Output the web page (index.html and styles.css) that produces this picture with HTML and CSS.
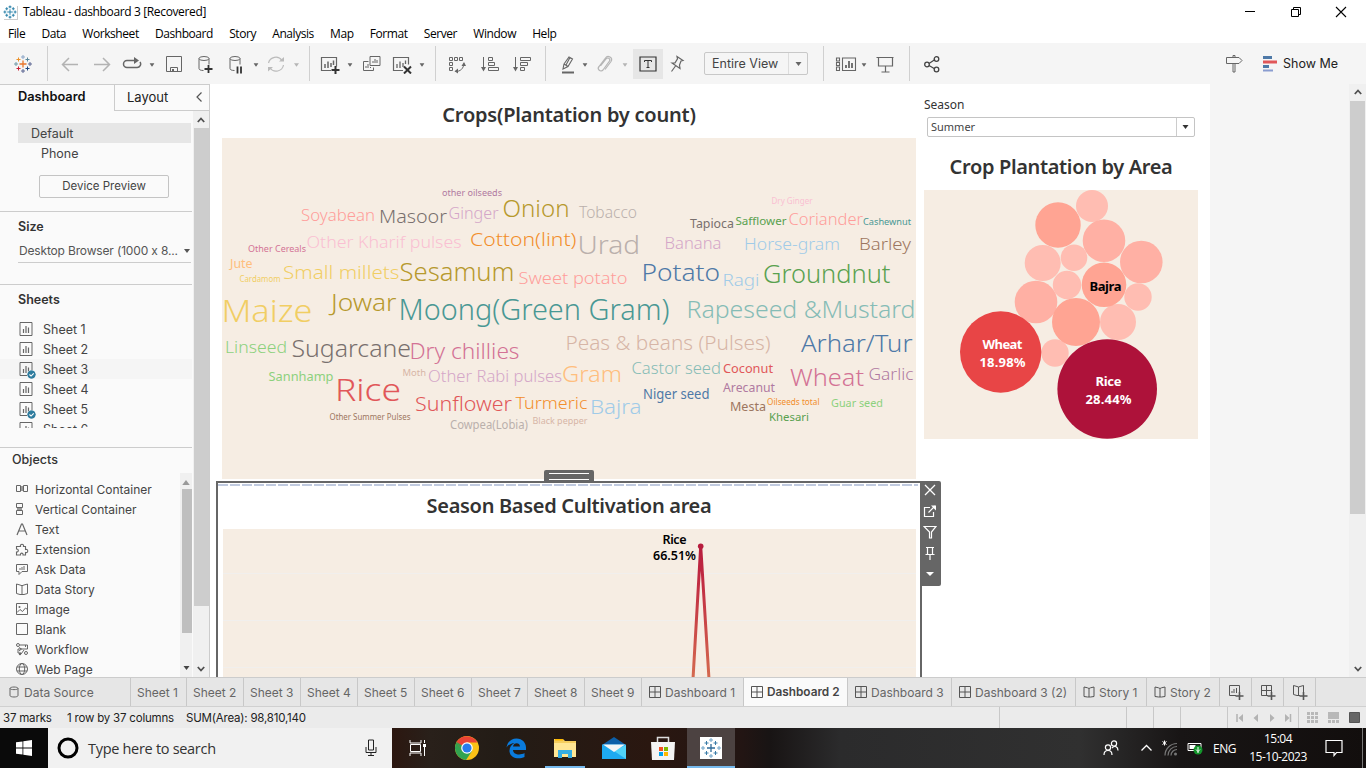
FILE: index.html
```html
<!DOCTYPE html>
<html lang="en">
<head>
<meta charset="utf-8">
<title>Tableau - dashboard 3 [Recovered]</title>
<link rel="stylesheet" href="styles.css">
</head>
<body>
<svg class="defs" width="0" height="0">
  <symbol id="sheet" viewBox="0 0 14 14"><path d="M1 .5h12v13H1z" fill="none" stroke="#666"/><path d="M4.500 7v4M7 4v7M9.500 5.500v5.500" stroke="#666" stroke-width="1.200"/></symbol>
  <symbol id="dash" viewBox="0 0 12 12"><path d="M.5 .5h11v11H.5zM6 .5v11M.5 6h11" fill="none" stroke="#555"/></symbol>
  <symbol id="book" viewBox="0 0 12 12"><path d="M1 1l3.500 .8L6 2.500l1.500-.7L11 1v9.500l-3.500 .5H4.500L1 10.500zM6 2.500V11" fill="none" stroke="#555"/></symbol>
  <symbol id="down" viewBox="0 0 6 4"><path d="M0 0h6L3 4z" fill="currentColor"/></symbol>
  <symbol id="chev" viewBox="0 0 8 6"><path d="M.8 5L4 1.500 7.200 5" fill="none" stroke="#505050" stroke-width="1.800"/></symbol>
</svg>

<header class="titlebar">
  <svg class="appicon" viewBox="0 0 15 15"><path d="M7.500 4.500v6M4.500 7.500h6M7.500 .5v3M6 2h3M7.500 11.500v3M6 13h3M2 6v3M.5 7.500h3M13 6v3M11.500 7.500h3M4 2.500v3M2.500 4h3M11 2.500v3M9.500 4h3M4 9.500v3M2.500 11h3M11 9.500v3M9.500 11h3" stroke="#2f84ab" stroke-width="1.100"/></svg>
  <span class="apptitle">Tableau - dashboard 3 [Recovered]</span>
  <div class="winbtns">
    <svg viewBox="0 0 12 12"><path d="M1 5.500h10" stroke="#000"/></svg>
    <svg viewBox="0 0 12 12"><path d="M1.500 3.500h7v7h-7zM3.500 3V1.500h7v7H9" fill="none" stroke="#000"/></svg>
    <svg viewBox="0 0 12 12"><path d="M1 1l10 10M11 1L1 11" stroke="#000" stroke-width="1.100"/></svg>
  </div>
</header>
<nav class="menu"><span>File</span><span>Data</span><span>Worksheet</span><span>Dashboard</span><span>Story</span><span>Analysis</span><span>Map</span><span>Format</span><span>Server</span><span>Window</span><span>Help</span></nav>

<div class="toolbar">
  <svg class="ic m13" viewBox="0 0 20 20"><path d="M10 6.500v7M6.500 10h7" stroke="#e8762c" stroke-width="1.300"/><path d="M10 1v4M8 3h4" stroke="#8ba5c7"/><path d="M10 15v4M8 17h4" stroke="#5b6591"/><path d="M3 8v4M1 10h4" stroke="#7099a6"/><path d="M17 8v4M15 10h4" stroke="#5b6591"/><path d="M5.500 3.500v4M3.500 5.500h4" stroke="#eb9129"/><path d="M14.500 3.500v4M12.500 5.500h4" stroke="#59879b"/><path d="M5.500 12.500v4M3.500 14.500h4" stroke="#c72035"/><path d="M14.500 12.500v4M12.500 14.500h4" stroke="#1f457e"/></svg>
  <i class="sep m14"></i>
  <svg class="ic m12" viewBox="0 0 20 20"><path d="M18 10.500H3M9 4l-6.500 6.500L9 17" fill="none" stroke="#b3b3b3" stroke-width="1.500"/></svg>
  <svg class="ic m12" viewBox="0 0 20 20"><path d="M2 10.500h15M11 4l6.500 6.500L11 17" fill="none" stroke="#b3b3b3" stroke-width="1.500"/></svg>
  <svg class="ic m10" viewBox="0 0 20 20"><path d="M13 6.500H5a3.500 3.500 0 0 0 0 7h10a3.500 3.500 0 0 0 3-5.500" fill="none" stroke="#666" stroke-width="1.500"/><path d="M12 3l5 3.500-5 3.500z" fill="#666"/></svg>
  <svg class="caret"><use href="#down" x="7.500" y="9" width="5" height="4"/></svg>
  <svg class="ic m2" viewBox="0 0 20 20"><path d="M2.500 2.500h15v15h-15zM6.500 17.500v-4h7v4" fill="none" stroke="#666"/><path d="M8 15h2v2H8z" fill="#666"/></svg>
  <svg class="ic m11" viewBox="0 0 20 20"><ellipse cx="9" cy="4.500" rx="5" ry="2" fill="none" stroke="#666"/><path d="M4 4.500v10c0 1.200 1.500 2 4.500 2M14 4.500v6" fill="none" stroke="#666"/><path d="M13.500 11v8M9.500 15h8" stroke="#333" stroke-width="1.800"/></svg>
  <svg class="ic m11" viewBox="0 0 20 20"><ellipse cx="9" cy="4.500" rx="5" ry="2" fill="none" stroke="#666"/><path d="M4 4.500v10c0 1.200 1.500 2 4.500 2M14 4.500v6" fill="none" stroke="#666"/><path d="M11.500 12.500v7M15 12.500v7" stroke="#333" stroke-width="1.800"/></svg>
  <svg class="caret"><use href="#down" x="7.500" y="9" width="5" height="4"/></svg>
  <svg class="ic" viewBox="0 0 20 20"><path d="M2.500 9A7.500 7.500 0 0 1 16 6.500M17.500 11A7.500 7.500 0 0 1 4 14" fill="none" stroke="#bbb" stroke-width="1.200"/><path d="M13 7.500h5V3zM7 13H2v4.500z" fill="#bbb"/></svg>
  <svg class="caret dim"><use href="#down" x="8" y="9" width="5" height="4"/></svg>
  <i class="sep m3"></i>
  <svg class="ic m10" viewBox="0 0 20 20"><path d="M11 16.500H1.500v-13h15v9" fill="none" stroke="#666" stroke-width="1.200"/><path d="M5 10v4M8 7.500V14M11 9v4M13.500 6.500V11" stroke="#666" stroke-width="1.500"/><path d="M15.500 12v8M11.500 16h8" stroke="#333" stroke-width="2"/></svg>
  <svg class="caret"><use href="#down" x="7.500" y="9" width="5" height="4"/></svg>
  <svg class="ic m2" viewBox="0 0 20 20"><path d="M8 2.500h10v9H8zM6.500 7.500h-5v9h10v-3" fill="none" stroke="#666"/><path d="M11 9V7M13 9V5M15 9V6M4 14v-2M6 14v-4M8.500 14v-1" stroke="#666"/></svg>
  <svg class="ic m10" viewBox="0 0 20 20"><path d="M11 16.500H1.500v-13h15v7" fill="none" stroke="#666" stroke-width="1.200"/><path d="M5 10v4M8 7.500V14M11 9v4M13.500 6.500V10" stroke="#666" stroke-width="1.300"/><path d="M12 12.500l7 7M19 12.500l-7 7" stroke="#333" stroke-width="2"/></svg>
  <svg class="caret"><use href="#down" x="7.500" y="9" width="5" height="4"/></svg>
  <i class="sep m3"></i>
  <svg class="ic m11" viewBox="0 0 20 20"><path d="M2.500 3.500h3v3h-3zM7.500 3.500h3v3h-3zM12.500 3.500h3v3h-3zM2.500 8.500h3v3h-3zM2.500 13.500h3v3h-3zM8.500 17.500c5 0 8-3 8.500-8" fill="none" stroke="#666"/><path d="M11 14.500v5L7.500 17.200zM14.500 12l2.500-4 2 4z" fill="#666"/></svg>
  <svg class="ic m13" viewBox="0 0 20 20"><path d="M3.500 3v13M8.500 3.500h4v3h-4zM8.500 8.500h6v3h-6zM8.500 13.500h10v3h-10z" fill="none" stroke="#666"/><path d="M1 13h5l-2.500 4.500z" fill="#666"/></svg>
  <svg class="ic m12" viewBox="0 0 20 20"><path d="M3.500 3v13M8.500 3.500h10v3h-10zM8.500 8.500h7v3h-7zM8.500 13.500h4v3h-4z" fill="none" stroke="#666"/><path d="M1 13h5l-2.500 4.500z" fill="#666"/></svg>
  <i class="sep m13"></i>
  <svg class="ic m12" viewBox="0 0 20 20"><path d="M6 10l5-7 3.500 2-4.500 7.500-5 2.500zM6 10l4 2.500M12 3.500l-4 7.500" fill="none" stroke="#666" stroke-width="1.100"/><path d="M4 18.500h12" stroke="#666" stroke-width="2"/></svg>
  <svg class="caret n"><use href="#down" x="4.500" y="9" width="5" height="4"/></svg>
  <svg class="ic m3" viewBox="0 0 20 20"><path d="M5.500 12L11 5a2 2 0 0 1 3.500 2L8 16a2.600 2.600 0 0 1-4-3.500L10.500 4a3.200 3.200 0 0 1 5.500 3.500L10 15.500" fill="none" stroke="#b5b5b5" stroke-width="1.200"/></svg>
  <svg class="caret c18 dim"><use href="#down" x="7.500" y="9" width="5" height="4"/></svg>
  <span class="tbox"><svg class="ic" viewBox="0 0 20 20"><path d="M2 3h16v14H2z" fill="none" stroke="#333" stroke-width="1.200"/><path d="M6.500 8V6.500h7V8M10 6.500v7M8.500 13.500h3" fill="none" stroke="#333"/></svg></span>
  <svg class="ic m4" viewBox="0 0 20 20"><path d="M10 2.500l6 4-2 .5-1.500 4 .5 3.500-8-5.500 3-.2 2.500-4zM8.500 12L4.500 17.500" fill="none" stroke="#666" stroke-width="1.200"/></svg>
  <span class="viewsel"><b>Entire View</b><svg class="selcaret"><use href="#down" x="6" y="9" width="7" height="4"/></svg></span>
  <i class="sep m15"></i>
  <svg class="ic w22 m11" viewBox="0 0 22 20"><path d="M1.500 4h3v3h-3zM1.500 8.500h3v3h-3zM1.500 13h3v3.500h-3zM7.500 4h13v12.500h-13z" fill="none" stroke="#666" stroke-width="1.100"/><path d="M11 11v3M14 7v7M17 9v5" stroke="#666" stroke-width="1.800"/></svg>
  <svg class="caret n"><use href="#down" x="4.500" y="9" width="5" height="4"/></svg>
  <svg class="ic m4" viewBox="0 0 20 20"><path d="M1.500 3.500h17M3.500 4v8h14V4M10.500 12v6M6.500 18h8" fill="none" stroke="#666" stroke-width="1.200"/></svg>
  <i class="sep m14"></i>
  <svg class="ic m12" viewBox="0 0 20 20"><path d="M7 9.500l6-4M7 11.500l6 3.500" stroke="#444" stroke-width="1.200"/><g fill="none" stroke="#444" stroke-width="1.300"><circle cx="5" cy="10.500" r="2.300"/><circle cx="14.500" cy="5" r="2.300"/><circle cx="14.500" cy="15.500" r="2.300"/></g></svg>
  <svg class="ic push" viewBox="0 0 20 20"><path d="M9 3V1.500h2V3M2.500 3.500h12.500l3 3-3 3H2.500zM9 9.500V18h2V9.500" fill="none" stroke="#666"/></svg>
  <svg class="ic m17" viewBox="0 0 20 20"><path d="M2 3.500h9" stroke="#4e79a7" stroke-width="3"/><path d="M2 8h14" stroke="#e15759" stroke-width="3"/><path d="M2 12.500h6" stroke="#4e79a7" stroke-width="3"/><path d="M2 16.500h10" stroke="#8a9dd0" stroke-width="2"/></svg>
  <span class="showme">Show Me</span>
</div>

<main class="work">
  <aside class="side">
    <div class="sidetabs"><b>Dashboard</b><span>Layout</span><svg viewBox="0 0 8 10"><path d="M6.500 .5L2 5l4.500 4.500" fill="none" stroke="#555" stroke-width="1.200"/></svg></div>
    <div class="sidebody">
      <div class="sidecol">
        <section class="device">
          <div class="dev on">Default</div><div class="dev phone">Phone</div>
          <button class="preview">Device Preview</button>
        </section>
        <section class="size"><h3>Size</h3><div class="sizesel"><span>Desktop Browser (1000 x 8...</span><svg width="8" height="4"><use href="#down" width="8" height="4"/></svg></div></section>
        <section class="sheets"><h3>Sheets</h3>
          <div class="sheetlist">
            <div><svg class="si"><use href="#sheet"/></svg>Sheet 1</div>
            <div><svg class="si"><use href="#sheet"/></svg>Sheet 2</div>
            <div class="hov"><svg class="si"><use href="#sheet"/></svg><svg class="tick" viewBox="0 0 8 8"><circle cx="4" cy="4" r="3.800" fill="#2e7c9e"/><path d="M2.200 4l1.400 1.400L6 3" fill="none" stroke="#fff"/></svg>Sheet 3</div>
            <div><svg class="si"><use href="#sheet"/></svg>Sheet 4</div>
            <div class="used"><svg class="si"><use href="#sheet"/></svg><svg class="tick" viewBox="0 0 8 8"><circle cx="4" cy="4" r="3.800" fill="#2e7c9e"/><path d="M2.200 4l1.400 1.400L6 3" fill="none" stroke="#fff"/></svg>Sheet 5</div>
            <div><svg class="si"><use href="#sheet"/></svg>Sheet 6</div>
          </div>
        </section>
        <section class="objects"><h3>Objects</h3>
          <div class="objwrap">
            <div class="objlist">
              <div><svg viewBox="0 0 14 14"><path d="M1.500 3.500h4v6h-4zM8.500 3.500h4v6h-4z" fill="none" stroke="#666"/><path d="M6 4h2v5H6z" fill="#999"/></svg>Horizontal Container</div>
              <div><svg viewBox="0 0 14 14"><path d="M1.500 1.500h6v4h-6zM1.500 8.500h6v4h-6z" fill="none" stroke="#666"/><path d="M2 6h5v2H2z" fill="#999"/></svg>Vertical Container</div>
              <div><svg viewBox="0 0 14 14"><path d="M2 13L6.500 2h1L12 13M4 9h6" fill="none" stroke="#666" stroke-width="1.200"/></svg>Text</div>
              <div><svg viewBox="0 0 14 14"><path d="M3.500 4.500h2c-1-3 4-3 3 0h2v3c3-1 3 4 0 3v2.500H8c.500-2.500-3-2.500-2.500 0H1.500V10c2.500 0 2.500-3 0-3v-2.500z" fill="none" stroke="#666" stroke-width="1.100"/></svg>Extension</div>
              <div><svg viewBox="0 0 14 14"><path d="M1.500 2.500h11v7H7L4 12.500v-3H1.500z" fill="none" stroke="#666"/><path d="M5 8V6M7 8V5M9 8V4" stroke="#999" stroke-width="1.500"/></svg>Ask Data</div>
              <div><svg viewBox="0 0 14 14"><path d="M1.500 2L5 3l2 .7L9 3l3.500-1v9.500L9 12.500H5l-3.500-1zM7 3.500v9" fill="none" stroke="#666"/></svg>Data Story</div>
              <div><svg viewBox="0 0 14 14"><path d="M1.500 1.500h11v11h-11zM2 10.500l3-3 2.500 2 3-3.500 2 1.500" fill="none" stroke="#666"/><circle cx="4.500" cy="5" r="1" fill="#666"/></svg>Image</div>
              <div><svg viewBox="0 0 14 14"><path d="M1.500 1.500h11v11h-11z" fill="none" stroke="#666"/></svg>Blank</div>
              <div><svg viewBox="0 0 14 14"><path d="M5 3h7.500v4H3v4h3M4 5.500L6.500 7 4 9M6 12l3-4M10.500 3v2" fill="none" stroke="#666"/><circle cx="3" cy="3" r="1.500" fill="none" stroke="#666"/><circle cx="11" cy="11" r="1.500" fill="none" stroke="#666"/><circle cx="5" cy="12" r="1.200" fill="#666"/></svg>Workflow</div>
              <div><svg viewBox="0 0 14 14"><g fill="none" stroke="#666"><circle cx="7" cy="7" r="5.500"/><ellipse cx="7" cy="7" rx="2.700" ry="5.500"/><path d="M2 5h10M2 9h10"/></g></svg>Web Page</div>
            </div>
            <div class="innerbar"><svg width="8" height="5" viewBox="0 0 6 4"><path d="M0 4h6L3 0z" fill="#999"/></svg><i></i><svg width="7" height="4"><use href="#down" width="7" height="4"/></svg></div>
          </div>
        </section>
      </div>
      <div class="vbar"><svg width="8" height="6"><use href="#chev"/></svg><i class="thumb a"></i><svg class="flip" width="8" height="6"><use href="#chev"/></svg></div>
    </div>
  </aside>

  <div class="canvas">
    <div class="leftcol">
      <h2 class="t1">Crops(Plantation by count)</h2>
      <svg class="cloud" viewBox="222 138 694 341">
        <g class="small">
        <text x="442" y="196" font-size="9.500" textLength="60" lengthAdjust="spacingAndGlyphs" fill="#b07aa1">other oilseeds</text>
        <text x="771.500" y="204" font-size="8.500" textLength="41" lengthAdjust="spacingAndGlyphs" fill="#fabfd2">Dry Ginger</text>
        <text x="690" y="228" font-size="12" textLength="44" lengthAdjust="spacingAndGlyphs" fill="#79706e">Tapioca</text>
        <text x="735.500" y="224.700" font-size="11" textLength="51" lengthAdjust="spacingAndGlyphs" fill="#59a14f">Safflower</text>
        <text x="863" y="224.700" font-size="9.500" textLength="48" lengthAdjust="spacingAndGlyphs" fill="#499894">Cashewnut</text>
        <text x="248" y="252" font-size="9.500" textLength="58" lengthAdjust="spacingAndGlyphs" fill="#d37295">Other Cereals</text>
        <text x="230" y="268" font-size="12" textLength="22.500" lengthAdjust="spacingAndGlyphs" fill="#ffbe7d">Jute</text>
        <text x="239.500" y="282" font-size="8" textLength="41" lengthAdjust="spacingAndGlyphs" fill="#f1ce63">Cardamom</text>
        <text x="268.500" y="381.300" font-size="13" textLength="65" lengthAdjust="spacingAndGlyphs" fill="#8cd17d">Sannhamp</text>
        <text x="402.500" y="375.500" font-size="9.500" textLength="23.500" lengthAdjust="spacingAndGlyphs" fill="#d7b5a6">Moth</text>
        <text x="723" y="373" font-size="12.500" textLength="50" lengthAdjust="spacingAndGlyphs" fill="#e15759">Coconut</text>
        <text x="723" y="392" font-size="12" textLength="52" lengthAdjust="spacingAndGlyphs" fill="#b07aa1">Arecanut</text>
        <text x="643" y="399" font-size="13.500" textLength="66.500" lengthAdjust="spacingAndGlyphs" fill="#4e79a7">Niger seed</text>
        <text x="730" y="411" font-size="12.500" textLength="36" lengthAdjust="spacingAndGlyphs" fill="#9d7660">Mesta</text>
        <text x="767" y="404.700" font-size="8" textLength="52.500" lengthAdjust="spacingAndGlyphs" fill="#f28e2b">Oilseeds total</text>
        <text x="831" y="407" font-size="11.500" textLength="52" lengthAdjust="spacingAndGlyphs" fill="#8cd17d">Guar seed</text>
        <text x="769" y="420.700" font-size="11.500" textLength="40" lengthAdjust="spacingAndGlyphs" fill="#59a14f">Khesari</text>
        <text x="329.500" y="419.700" font-size="8.500" textLength="81" lengthAdjust="spacingAndGlyphs" fill="#9d7660">Other Summer Pulses</text>
        <text x="450" y="429" font-size="12" textLength="78" lengthAdjust="spacingAndGlyphs" fill="#bab0ac">Cowpea(Lobia)</text>
        <text x="532.500" y="423.500" font-size="9.500" textLength="55" lengthAdjust="spacingAndGlyphs" fill="#d7b5a6">Black pepper</text>
        </g>
        <g>
        <text x="301" y="221" font-size="16" textLength="74" lengthAdjust="spacingAndGlyphs" fill="#ff9d9a">Soyabean</text>
        <text x="379" y="222.700" font-size="18" textLength="68" lengthAdjust="spacingAndGlyphs" fill="#79706e">Masoor</text>
        <text x="448.500" y="219.300" font-size="16" textLength="50" lengthAdjust="spacingAndGlyphs" fill="#d4a6c8">Ginger</text>
        <text x="502.500" y="217" font-size="24" textLength="67" lengthAdjust="spacingAndGlyphs" fill="#b6992d">Onion</text>
        <text x="579" y="218" font-size="15.500" textLength="58" lengthAdjust="spacingAndGlyphs" fill="#bab0ac">Tobacco</text>
        <text x="788.500" y="225.300" font-size="16.500" textLength="74.500" lengthAdjust="spacingAndGlyphs" fill="#ff9d9a">Coriander</text>
        <text x="306.500" y="248" font-size="16.500" textLength="155" lengthAdjust="spacingAndGlyphs" fill="#fabfd2">Other Kharif pulses</text>
        <text x="470" y="246.300" font-size="18.500" textLength="106.500" lengthAdjust="spacingAndGlyphs" fill="#f28e2b">Cotton(lint)</text>
        <text x="577.500" y="253.700" font-size="26.500" textLength="62.500" lengthAdjust="spacingAndGlyphs" fill="#bab0ac">Urad</text>
        <text x="664.500" y="249.300" font-size="16" textLength="57" lengthAdjust="spacingAndGlyphs" fill="#d4a6c8">Banana</text>
        <text x="744" y="250.300" font-size="17" textLength="96" lengthAdjust="spacingAndGlyphs" fill="#a0cbe8">Horse-gram</text>
        <text x="859" y="250.300" font-size="17" textLength="52" lengthAdjust="spacingAndGlyphs" fill="#9d7660">Barley</text>
        <text x="283" y="279" font-size="18" textLength="116.500" lengthAdjust="spacingAndGlyphs" fill="#f1ce63">Small millets</text>
        <text x="399.500" y="281" font-size="25" textLength="115" lengthAdjust="spacingAndGlyphs" fill="#b6992d">Sesamum</text>
        <text x="518.500" y="284" font-size="16.500" textLength="109" lengthAdjust="spacingAndGlyphs" fill="#ff9d9a">Sweet potato</text>
        <text x="641.500" y="280.700" font-size="24" textLength="78.500" lengthAdjust="spacingAndGlyphs" fill="#4e79a7">Potato</text>
        <text x="722.500" y="286" font-size="17" textLength="37" lengthAdjust="spacingAndGlyphs" fill="#a0cbe8">Ragi</text>
        <text x="763" y="283.300" font-size="25" textLength="127.500" lengthAdjust="spacingAndGlyphs" fill="#59a14f">Groundnut</text>
        <text x="221.500" y="321.700" font-size="32" textLength="91" lengthAdjust="spacingAndGlyphs" fill="#f1ce63">Maize</text>
        <text x="331" y="310.700" font-size="23" textLength="65.500" lengthAdjust="spacingAndGlyphs" fill="#b6992d">Jowar</text>
        <text x="398.500" y="320" font-size="29" textLength="271" lengthAdjust="spacingAndGlyphs" fill="#499894">Moong(Green Gram)</text>
        <text x="686.500" y="318" font-size="24.500" textLength="229" lengthAdjust="spacingAndGlyphs" fill="#86bcb6">Rapeseed &amp;Mustard</text>
        <text x="225" y="353" font-size="16.500" textLength="62" lengthAdjust="spacingAndGlyphs" fill="#8cd17d">Linseed</text>
        <text x="291.500" y="357" font-size="24" textLength="119.500" lengthAdjust="spacingAndGlyphs" fill="#79706e">Sugarcane</text>
        <text x="409.500" y="359" font-size="21" textLength="110" lengthAdjust="spacingAndGlyphs" fill="#d37295">Dry chillies</text>
        <text x="565.500" y="350" font-size="20" textLength="205" lengthAdjust="spacingAndGlyphs" fill="#d7b5a6">Peas &amp; beans (Pulses)</text>
        <text x="801" y="351.700" font-size="24.500" textLength="111.500" lengthAdjust="spacingAndGlyphs" fill="#4e79a7">Arhar/Tur</text>
        <text x="335" y="401" font-size="32" textLength="66" lengthAdjust="spacingAndGlyphs" fill="#e15759">Rice</text>
        <text x="428" y="381.700" font-size="16.500" textLength="134" lengthAdjust="spacingAndGlyphs" fill="#d4a6c8">Other Rabi pulses</text>
        <text x="562" y="382" font-size="22.500" textLength="60" lengthAdjust="spacingAndGlyphs" fill="#ffbe7d">Gram</text>
        <text x="631.500" y="374" font-size="15.500" textLength="89.500" lengthAdjust="spacingAndGlyphs" fill="#86bcb6">Castor seed</text>
        <text x="790" y="385.700" font-size="24.500" textLength="74" lengthAdjust="spacingAndGlyphs" fill="#d37295">Wheat</text>
        <text x="868.500" y="380" font-size="16" textLength="45" lengthAdjust="spacingAndGlyphs" fill="#b07aa1">Garlic</text>
        <text x="415" y="411.300" font-size="20" textLength="97" lengthAdjust="spacingAndGlyphs" fill="#e15759">Sunflower</text>
        <text x="515.500" y="408.700" font-size="17" textLength="72" lengthAdjust="spacingAndGlyphs" fill="#f28e2b">Turmeric</text>
        <text x="590" y="414" font-size="20" textLength="51.500" lengthAdjust="spacingAndGlyphs" fill="#a0cbe8">Bajra</text>
        </g>
      </svg>
      <div class="selected">
        <div class="dashline"></div>
        <h2 class="t2">Season Based Cultivation area</h2>
        <svg class="line" viewBox="223 529 693 148">
          <defs><linearGradient id="lg" gradientUnits="userSpaceOnUse" x1="0" y1="546" x2="0" y2="677"><stop offset="0" stop-color="#b71d3e"/><stop offset=".25" stop-color="#c02a42"/><stop offset="1" stop-color="#d4694f"/></linearGradient></defs>
          <path d="M223 573.500h693M223 620.500h693M223 667.500h693" stroke="#f1efed"/>
          <path d="M693 679L700.700 546 709 679" fill="none" stroke="url(#lg)" stroke-width="3"/>
          <circle cx="700.700" cy="546.300" r="2.800" fill="#b71d3e"/>
          <text x="674.500" y="544" textLength="24">Rice</text><text x="674.500" y="560" textLength="43">66.51%</text>
        </svg>
        <div class="grip"></div>
        <div class="floatbar">
          <svg viewBox="0 0 14 14"><path d="M2 2l10 10M12 2L2 12" stroke="#fff" stroke-width="1.300"/></svg>
          <svg viewBox="0 0 14 14"><path d="M7 3.500H1.500v9h9V8M5.500 8.500L12 2" fill="none" stroke="#fff" stroke-width="1.200"/><path d="M8 1.500h5v5z" fill="#fff"/></svg>
          <svg viewBox="0 0 14 14"><path d="M1 1.500h12L8.500 7v6h-2V7z" fill="none" stroke="#fff" stroke-width="1.200"/></svg>
          <svg viewBox="0 0 14 14"><path d="M3 1.500h8M4.500 1.500V8M9.500 1.500V8M2.500 8.500h9M7 8.500V14" fill="none" stroke="#fff" stroke-width="1.200"/></svg>
          <svg viewBox="0 0 14 14"><path d="M3 5h8l-4 4z" fill="#fff"/></svg>
        </div>
      </div>
    </div>
    <div class="rightcol">
      <label class="season">Season</label>
      <div class="seasonsel"><span>Summer</span><svg class="sc"><use href="#down" x="5" y="7" width="7" height="4"/></svg></div>
      <h2 class="t3">Crop Plantation by Area</h2>
      <svg class="bubbles" viewBox="924 190 274 249">
        <g fill="#ffbdb2"><circle cx="1092" cy="206" r="16"/><circle cx="1042.700" cy="263" r="18"/><circle cx="1074" cy="257.700" r="13.300"/><circle cx="1067" cy="285" r="14.200"/><circle cx="1138" cy="297" r="13.700"/><circle cx="1118" cy="322" r="18"/><circle cx="1055" cy="353" r="13.700"/></g>
        <g fill="#ffb0a4"><circle cx="1104" cy="240.700" r="21.300"/><circle cx="1141.300" cy="262" r="21.300"/><circle cx="1036" cy="302" r="21.300"/></g>
        <g fill="#ffa493"><circle cx="1058" cy="225" r="22.700"/><circle cx="1104" cy="284.800" r="22.300"/><circle cx="1076" cy="322" r="24"/></g>
        <circle cx="1000.700" cy="352" r="40.700" fill="#e84546"/><circle cx="1107.200" cy="389" r="49.800" fill="#ae123a"/>
        <text x="1105.500" y="291" textLength="32">Bajra</text>
        <g fill="#fff"><text x="1002.500" y="349" textLength="40">Wheat</text><text x="1002.500" y="367" textLength="46">18.98%</text><text x="1108.500" y="386" textLength="26">Rice</text><text x="1108.500" y="404" textLength="46">28.44%</text></g>
      </svg>
    </div>
  </div>
  <div class="gutter"></div>
  <div class="vbar right"><svg width="8" height="6"><use href="#chev"/></svg><i class="thumb b"></i><svg class="flip" width="8" height="6"><use href="#chev"/></svg></div>
</main>

<div class="tabs">
  <span class="ds"><svg viewBox="0 0 10 12"><path d="M1 2.500C1 .5 9 .5 9 2.500v7c0 2-8 2-8 0zM1 2.500c0 1.500 8 1.500 8 0" fill="none" stroke="#666"/></svg>Data Source</span>
  <span>Sheet 1</span><span>Sheet 2</span><span>Sheet 3</span><span>Sheet 4</span><span>Sheet 5</span><span>Sheet 6</span><span>Sheet 7</span><span>Sheet 8</span><span>Sheet 9</span>
  <span><svg><use href="#dash"/></svg>Dashboard 1</span><span class="act"><svg><use href="#dash"/></svg>Dashboard 2</span><span><svg><use href="#dash"/></svg>Dashboard 3</span><span><svg><use href="#dash"/></svg>Dashboard 3 (2)</span>
  <span><svg><use href="#book"/></svg>Story 1</span><span><svg><use href="#book"/></svg>Story 2</span>
  <span class="new"><svg viewBox="0 0 16 16"><path d="M8 11.500H1.500v-10h10V8M4 9V7M6 9V5M8.500 9V4" fill="none" stroke="#555"/><path d="M11.500 8v8M7.500 12h8" stroke="#555" stroke-width="1.600"/></svg></span>
  <span class="new"><svg viewBox="0 0 16 16"><path d="M8 11.500H1.500v-10h10V8M6.500 1.500v10M1.500 6.500h10" fill="none" stroke="#555"/><path d="M11.500 8v8M7.500 12h8" stroke="#555" stroke-width="1.600"/></svg></span>
  <span class="new"><svg viewBox="0 0 16 16"><path d="M8 11.500H5l-3.500-1V1.500L5 2.500l1.500.5 1.500-.5 3.500-1V8M6.500 3v8.500" fill="none" stroke="#555"/><path d="M11.500 8v8M7.500 12h8" stroke="#555" stroke-width="1.600"/></svg></span>
</div>

<div class="status">
  <span class="s1">37 marks</span><span class="s2">1 row by 37 columns</span><span class="s3">SUM(Area): 98,810,140</span>
  <i class="c1"></i><i class="c2"></i><i class="c3"></i><i class="c4"></i>
  <div class="navs"><svg viewBox="0 0 60 8"><path d="M1 0v8M54.500 0v8" stroke="#b3b3b3" stroke-width="1.500"/><path d="M7 0v8L2.500 4zM22 0v8l-4.500-4zM34 0v8l4.500-4zM49 0v8l4.500-4z" fill="#b3b3b3"/></svg></div>
  <div class="views"><svg viewBox="0 0 54 12"><path d="M0 0h3v3H0zM4 0h3v3H4zM8 0h3v3H8zM0 4h3v3H0zM4 4h3v3H4zM8 4h3v3H8zM0 8h3v3H0zM4 8h3v3H4zM8 8h3v3H8zM21 0h11v7H21zM21 8h3v3h-3zM25 8h3v3h-3zM29 8h3v3h-3z" fill="#b8b8b8"/><path d="M42.500 .5h10v10h-10z" fill="#666" stroke="#555"/></svg></div>
</div>

<footer class="taskbar">
  <div class="start"><svg viewBox="0 0 16 16"><path d="M0 2.300L6.500 1.400V7.600H0zM7.300 1.300L16 0V7.600H7.300zM0 8.400h6.500v6.200L0 13.700zM7.300 8.400H16V16L7.300 14.700z" fill="#fff"/></svg></div>
  <div class="search"><svg class="ring" viewBox="0 0 22 22"><circle cx="11" cy="11" r="9" fill="none" stroke="#000" stroke-width="3"/></svg><span>Type here to search</span><svg class="mic" viewBox="0 0 12 18"><path d="M3.500 1h5v10h-5zM1 8v5.500h10V8M6 13.500V17M3 16.500h6" fill="none" stroke="#222"/></svg></div>
  <div class="apps">
    <span><svg viewBox="0 0 18 18"><path d="M1 1v3h11V1M1.500 5.500h10v7h-10zM1 17v-3h11v3M15.500 1v3M15.500 8v9" fill="none" stroke="#fff"/><path d="M14 5h3v3h-3z" fill="#fff"/></svg></span>
    <span><svg class="big" viewBox="0 0 24 24"><circle cx="12" cy="12" r="12" fill="#fbc116"/><path d="M12 12L1.600 6A12 12 0 0 0 11 23.950L17 15z" fill="#31a350"/><path d="M1.600 6A12 12 0 0 1 22.400 6.500H12L7 15z" fill="#ea4335"/><path d="M1.600 6L7 15l5 3-1-6z" fill="#31a350"/><circle cx="12" cy="12" r="5.800" fill="#fff"/><circle cx="12" cy="12" r="4.600" fill="#287ced"/></svg></span>
    <span><svg class="edge" viewBox="0 0 20 20"><path d="M.5 9C1.500 3 5.500 0 10.500 0 16.500 0 20 4.500 20 9v2.500H7c.2 5 7.500 5.500 11.500 3v4c-5 2.500-14 2-15-5.500-.4-4 2-7 5-8.500C5 5 2 6.500.5 9zM7 8h7c0-4.500-6.500-4.500-7 0z" fill="#0a7bdc"/></svg></span>
    <span class="open"><svg class="big" viewBox="0 0 24 24"><path d="M1 3h9l2 2h11v16H1z" fill="#f5ce5f"/><path d="M1 7h22v14H1z" fill="#ffe694"/><path d="M5 22v-8h14v8h-4v-4H9v4z" fill="#35aee4"/><path d="M2 3h8v1.500H2z" fill="#ffb900"/></svg></span>
    <span><svg class="big" viewBox="0 0 24 24"><path d="M0 9l12-8 12 8v3H0z" fill="#0d5fa8"/><path d="M0 8.500h24V23H0z" fill="#1eaaf1"/><path d="M24 9v14L12 15z" fill="#50d2f7"/><path d="M1 8.500h22L12 16z" fill="#f5f5f5"/></svg></span>
    <span><svg class="big" viewBox="0 0 24 24"><path d="M6.500 7V1.500h11V7" fill="none" stroke="#ddd" stroke-width="1.500"/><path d="M0 6h24l-1 18H1z" fill="#f4f4f4"/><path d="M8 11h4v4H8z" fill="#f25022"/><path d="M13 11h4v4h-4z" fill="#7fba00"/><path d="M8 16h4v4H8z" fill="#00a4ef"/><path d="M13 16h4v4h-4z" fill="#ffb900"/></svg></span>
    <span class="cur"><svg class="big" viewBox="0 0 24 24"><path d="M1 1h22v22H1z" fill="#fff"/><path d="M12 8v8M8 12h8" stroke="#2e6b99" stroke-width="1.300"/><path d="M12 2v4M10 4h4M12 18v4M10 20h4M4 10v4M2 12h4M20 10v4M18 12h4" stroke="#6fa3c7"/><path d="M7.500 5v4M5.500 7h4M16.500 5v4M14.500 7h4M7.500 15v4M5.500 17h4M16.500 15v4M14.500 17h4" stroke="#3a7ca8"/></svg></span>
  </div>
  <div class="tray">
    <svg class="people" viewBox="0 0 16 16"><g fill="none" stroke="#fff" stroke-width="1.200"><circle cx="11" cy="3.500" r="2.600"/><circle cx="5" cy="7.500" r="2.600"/><path d="M1 15c0-6 8-6 8 0M9 8c3-3 6-1 6 2.500"/></g></svg>
    <svg class="up" viewBox="0 0 12 8"><path d="M1 6.500l5-5 5 5" fill="none" stroke="#fff" stroke-width="1.300"/></svg>
    <svg class="wifi" viewBox="0 0 16 16"><path d="M3 15.500A12 12 0 0 1 15 3.500M6 15.500a9 9 0 0 1 9-9M9 15.500a6 6 0 0 1 6-6" fill="none" stroke="#777" stroke-width="1.200"/><circle cx="13.500" cy="14" r="1.500" fill="#777"/><path d="M2.500 .5v5M.5 1.500l4 3M4.500 1.500l-4 3" stroke="#fff"/></svg>
    <svg class="batt" viewBox="0 0 16 14"><path d="M1 2.500h13v7H1z" fill="none" stroke="#fff"/><path d="M2.500 4h6v4h-6z" fill="#fff"/><circle cx="11" cy="9" r="4.500" fill="#13952b"/><path d="M11 6v6M9 8.500l2 2 2-2" stroke="#fff" fill="none"/></svg>
    <span class="eng">ENG</span><span class="clock">15:04<br>15-10-2023</span>
    <svg class="note" viewBox="0 0 18 18"><path d="M1 1.500h16v12h-5.500L9 16.500 9 13.500H1z" fill="none" stroke="#fff" stroke-width="1.200"/></svg>
    <i class="peek"></i>
  </div>
</footer>
</body>
</html>
```
FILE: styles.css
```css
*{box-sizing:border-box}
body{margin:0;width:1366px;height:768px;overflow:hidden;display:flex;flex-direction:column;background:#fff;font-family:"Open Sans","Noto Sans",sans-serif;font-size:12px;color:#000}
svg{display:block;flex:none}
.defs{position:absolute}
h2,h3{margin:0}

.titlebar{height:23px;display:flex;align-items:center;padding-left:3px;flex:none}
.appicon{width:14px;height:14px;box-shadow:1px 1px 0 #ccc}
.apptitle{margin-left:6px;font-size:12px;letter-spacing:-.36px}
.winbtns{margin-left:auto;display:flex;gap:33.5px;padding-right:19px}
.winbtns svg{width:12px;height:12px}
.menu{height:20px;flex:none;display:flex;gap:16.2px;padding-left:8px;align-items:center;letter-spacing:-.43px}

.toolbar{height:41px;flex:none;background:#f5f5f5;display:flex;align-items:center;color:#666}
.ic{width:20px;height:20px}
.w22{width:22px}
.caret{width:20px;height:20px}
.caret.n{width:14px}.caret.c18{width:18px}
.dim{color:#b5b5b5}
.sep{width:1px;height:35px;background:#d0d0d0;flex:none}
.m2{margin-left:2px}.m3{margin-left:3px}.m4{margin-left:4px}.m10{margin-left:10px}.m11{margin-left:11px}.m12{margin-left:12px}.m13{margin-left:13px}.m14{margin-left:14px}.m15{margin-left:15px}.m17{margin-left:17px}
.tbox{width:30px;height:30px;background:#e6e6e6;display:flex;align-items:center;justify-content:center}
.viewsel{margin-left:17px;width:104px;height:23px;border:1px solid #c8c8c8;border-radius:2px;display:flex;align-items:center;justify-content:space-between;padding-left:7px}
.viewsel b{font:12.5px Inter,sans-serif;color:#444}
.selcaret{width:19px;height:21px;border-left:1px solid #ddd}
.push{margin-left:auto}
.showme{font:12.5px Inter,sans-serif;color:#222;width:54px;margin:0 29px 0 2px;white-space:nowrap}

.work{height:593px;flex:none;display:flex}
.side{width:210px;border-right:1px solid #ccc;border-top:1px solid #ccc;background:#fafafa;display:flex;flex-direction:column;font-family:Inter,sans-serif;color:#444}
.sidetabs{height:26px;flex:none;display:flex}
.sidetabs b{width:114px;padding:4px 0 0 18px;color:#111;font-weight:600;font-size:12.8px}
.sidetabs span{flex:1;border-left:1px solid #ccc;border-bottom:1px solid #ccc;padding:4px 0 0 12px;color:#222;font-size:13px}
.sidetabs svg{width:14px;height:26px;border-bottom:1px solid #ccc;padding:7px 6px 8px 0}
.sidebody{flex:1;display:flex;min-height:0}
.sidecol{width:192px;margin-right:1px;display:flex;flex-direction:column;min-height:0}
h3{font-size:12.5px;font-weight:600;color:#333;line-height:16px}
.device{height:101px;flex:none;border-bottom:1px solid #ccc;padding:12px 1px 0 18px;font-size:12.5px}
.dev{height:20px;line-height:21px;padding-left:13px}
.dev.on{background:#e6e6e6}
.phone{padding-left:23px}
.preview{display:block;margin:12px 0 0 21px;width:130px;height:23px;border:1px solid #c4c4c4;border-radius:2px;background:#fafafa;font:11.5px Inter,sans-serif;color:#444;padding:0 0 2px}
.size{height:73px;flex:none;border-bottom:1px solid #ccc;padding:7px 1px 0 18px}
.sizesel{height:28px;border-bottom:1px solid #ccc;display:flex;align-items:center;justify-content:space-between;padding:4px 0 0 1px;font-size:12px;white-space:nowrap;color:#555;letter-spacing:-.16px}
.sheets{height:163px;flex:none;border-bottom:1px solid #ccc;padding-top:7px}
.sheets h3{padding-left:18px}
.sheetlist{margin-top:11px;height:109px;overflow:hidden;font-size:12.5px}
.sheetlist div{height:20px;display:flex;align-items:center;padding-left:19px;position:relative;gap:10px}
.sheetlist .hov{background:#f5f5f5}
.si{width:14px;height:14px}
.tick{position:absolute;left:27px;top:11px;width:9px;height:9px;background:#fafafa;border-radius:50%}
.objects{flex:1;padding-top:4px;min-height:0;overflow:hidden}
.objects h3{padding-left:12px;font-weight:500}
.objwrap{display:flex;height:209px}
.objlist{width:180px;padding-top:11px;font-size:12px;height:209px;overflow:hidden}
.objlist div{height:20px;display:flex;align-items:center;padding-left:15px;gap:6px;white-space:nowrap}
.objlist svg{width:14px;height:14px}
.innerbar{width:12px;background:#f0f0f0;height:204px;margin-top:5px;display:flex;flex-direction:column;align-items:center;padding-top:7px;color:#444}
.innerbar i{width:10px;margin:4px 0 0 2px;height:144px;background:#bfbfbf;align-self:stretch}
.innerbar svg:last-child{margin-top:33px}
.vbar{width:16px;background:#f0f0f0;display:flex;flex-direction:column;align-items:center;padding-top:6px}
.thumb{width:15px;background:#cdcdcd;margin-top:5px;flex:none}
.thumb.a{height:478px}
.thumb.b{height:413px;margin-top:6px}
.flip{transform:scaleY(-1);margin-top:60px}
.vbar.right{width:17px;padding-top:5px}
.right .flip{margin-top:152px}
.gutter{width:139px;background:#f5f5f5;flex:none}

.canvas{width:1000px;flex:none;background:#fff;display:flex}
h2{font:600 20px/26px "Noto Sans",sans-serif;color:#333;text-align:center;white-space:nowrap}
.leftcol{width:712px;padding:18px 0 0 6px;flex:none}
.t1{margin-left:6px;width:694px;height:36px;letter-spacing:-.23px}
.cloud{width:694px;height:341px;margin-left:6px;background:#f6ede3}
.cloud text{font-family:"Noto Sans",sans-serif;font-weight:300}
.cloud .small text{font-weight:400}
.selected{position:relative;margin-top:2px;width:706px;height:196px;border:2px solid #666;border-bottom:0}
.dashline{height:2px;margin:1px 2px 0 0;background:repeating-linear-gradient(90deg,#c0cadf 0 10px,#fff 10px 12px)}
.t2{height:43px;padding-top:7px;letter-spacing:-.31px}
.line{width:693px;height:148px;margin-left:5px;background:#f6ede3}
.line text,.bubbles text{font:600 12.500px "Noto Sans",sans-serif;text-anchor:middle}
.bubbles text{font-weight:700;font-size:13px}
.grip{position:absolute;left:326px;top:-13px;width:50px;height:12px;background:#666;border-radius:2px 2px 0 0}
.grip::before{content:"";display:block;width:40px;height:5px;border-top:1px solid #fff;border-bottom:1px solid #fff;transform:translate(5px,3px)}
.floatbar{position:absolute;left:702px;top:-2px;width:21px;height:105px;background:#666;border-radius:0 2px 2px 0;display:flex;flex-direction:column;align-items:center;gap:7px;padding:2px 1px 0 0}
.floatbar svg{width:14px;height:14px}
.rightcol{width:276px;padding:13px 2px 0;margin-left:0}
.season{display:block;font:12px/16px "Noto Sans",sans-serif;color:#333}
.seasonsel{margin:4px 0 0 3px;width:268px;height:20px;border:1px solid #c4c4c4;border-radius:2px;display:flex;align-items:center;justify-content:space-between;font:11px "Noto Sans",sans-serif;color:#444;padding-left:3px}
.seasonsel span{padding-bottom:1px}
.sc{width:18px;height:18px;border-left:1px solid #ccc;color:#333}
.t3{margin-top:17px;height:36px;width:274px;letter-spacing:-.35px}
.bubbles{width:274px;height:249px;background:#f6ede3}

.tabs{height:30px;flex:none;background:#e6e6e6;border-top:1px solid #ccc;border-bottom:1px solid #d0d0d0;display:grid;grid-template-columns:131px 56px 57px 57px 57px 57px 57px 56px 57px 57px 102px 104px 104px 124px 71px 73px 32px 32px 32px;font:12px Inter,sans-serif;color:#666}
.tabs span{border-right:1px solid #c8c8c8;display:flex;align-items:center;padding-left:7px;gap:4px;white-space:nowrap}
.tabs span:nth-child(-n+10){padding-left:6px}
.tabs svg{width:12px;height:12px}
.tabs .ds:first-child{padding-left:9px;gap:5px}.tabs .ds svg{width:10px}
.tabs .act{background:#fafafa;color:#444;font-weight:600;font-size:11.8px}
.tabs .new{padding-left:8px}.tabs .new svg{width:16px;height:16px}
.status{height:21px;flex:none;background:#ebebeb;display:flex;align-items:center;font:11.500px Inter,sans-serif;color:#222;white-space:nowrap;letter-spacing:-.2px}
.s1{width:67px;padding-left:3px}.s2{width:119px}.s3{width:813px}
.status i,.navs,.views{height:21px;border-left:1px solid #c8c8c8;flex:none}
.c1{width:127px}.c2{width:27px}.c3{width:27px}.c4{width:47px}
.navs{width:71px;padding:7px 0 0 8px}.navs svg{width:60px;height:8px}
.views{width:67px;padding:5px 0 0 8px}.views svg{width:54px;height:12px}

.taskbar{height:40px;flex:none;display:flex;background:linear-gradient(90deg,#0a0a0a 0,#0a0a0a 48px,#2c1710 392px,#29201a 430px,#231c16 500px,#2a1710 650px,#231513 740px,#181414 770px,#2b2b2c 840px,#303030 1080px,#181515 1180px,#120e0d 1366px)}
.start{width:48px;display:flex;align-items:center;justify-content:center}.start svg{width:16px;height:16px}
.search{width:344px;background:#f1f1f1;display:flex;align-items:center;padding-left:9px}
.ring{width:22px;height:22px}.search span{margin-left:9px;font-size:14.500px;letter-spacing:-.3px;color:#333;flex:1}
.mic{width:12px;height:18px;margin-right:15px}
.apps{display:flex;padding-left:1px}
.apps span{width:49px;display:flex;align-items:center;justify-content:center}
.apps svg{width:18px;height:18px}.apps .big{width:24px;height:24px}.apps .edge{width:20px;height:21px}
.apps .open{background:linear-gradient(#76b9ed,#76b9ed) center bottom/40px 2px no-repeat}
.apps .cur{background:linear-gradient(#76b9ed,#76b9ed) center bottom/48px 2px no-repeat,#4c4241;width:48px}
.tray{margin-left:auto;display:flex;align-items:center;color:#fff}
.people{width:16px;height:16px;margin-right:21px}
.up{width:13px;height:8px;margin-right:9px}
.wifi{width:16px;height:16px;margin-right:9px}
.batt{width:16px;height:14px;margin-right:10px}
.eng{width:24px;font-size:12px;letter-spacing:-.5px}
.clock{width:58px;margin:0 18px 0 12px;text-align:center;font-size:12px;line-height:18px;letter-spacing:-.5px;white-space:nowrap}
.note{width:18px;height:18px;margin-right:19px}
.peek{width:1px;height:40px;background:#777;margin-right:3px}
```
